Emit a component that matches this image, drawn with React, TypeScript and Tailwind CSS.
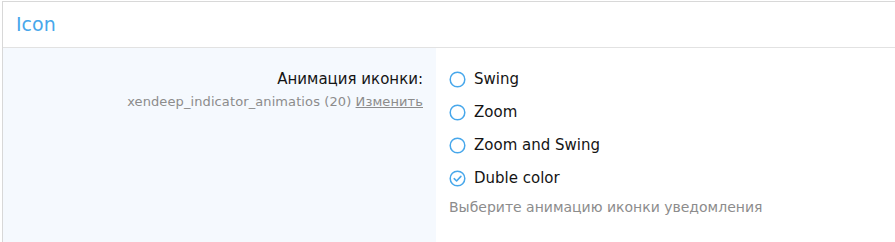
import React from "react";

const options = [
  { label: "Swing", checked: false },
  { label: "Zoom", checked: false },
  { label: "Zoom and Swing", checked: false },
  { label: "Duble color", checked: true },
];

function RadioIcon({ checked }: { checked: boolean }) {
  return (
    <svg width="17" height="17" viewBox="0 0 17 17" className="shrink-0">
      <circle cx="8.5" cy="8.5" r="7.3" fill="none" stroke="#47a7eb" strokeWidth="1.5" />
      {checked && (
        <path d="M5.2 8.7 L7.6 11 L11.9 6.4" fill="none" stroke="#47a7eb" strokeWidth="1.6" strokeLinecap="round" strokeLinejoin="round" />
      )}
    </svg>
  );
}

export default function App() {
  return (
    <div className="w-[895px] h-[242px] bg-white pl-[2px] pt-px" style={{ fontFamily: '"DejaVu Sans", Verdana, sans-serif' }}>
      <div className="h-full border-t border-l border-[#d8d8d8]">
        {/* Header */}
        <div className="h-[46px] flex items-center px-[13px] border-b border-[#e2e2e2]">
          <h2 className="text-[19px] text-[#47a7eb] leading-none">Icon</h2>
        </div>

        {/* Form row */}
        <div className="flex h-[194px]">
          <div className="w-[433px] bg-[#f5f9fe] pt-[21px] pr-[13px] text-right">
            <div className="text-[15px] text-[#141414] leading-[20px]">Анимация иконки:</div>
            <div className="text-[13px] text-[#8c8c8c] leading-[20px] mt-[3px] tracking-[0.1px]">
              xendeep_indicator_animatios (20){" "}
              <a href="#" className="underline text-[#8c8c8c]">Изменить</a>
            </div>
          </div>
          <div className="flex-1 pl-[13px] pt-[21px]">
            <ul className="flex flex-col gap-[13px]">
              {options.map((o) => (
                <li key={o.label} className="flex items-center gap-[8px] h-[20px]">
                  <RadioIcon checked={o.checked} />
                  <span className="text-[15px] text-[#141414]">{o.label}</span>
                </li>
              ))}
            </ul>
            <p className="text-[14px] text-[#8c8c8c] mt-[9px]">Выберите анимацию иконки уведомления</p>
          </div>
        </div>
      </div>
    </div>
  );
}
